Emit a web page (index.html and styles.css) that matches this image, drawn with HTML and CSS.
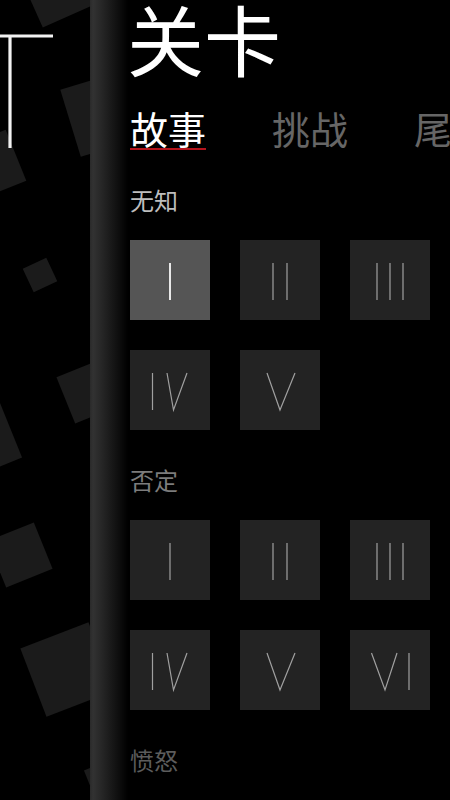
FILE: index.html
```html
<!DOCTYPE html>
<html lang="zh-CN">
<head>
    <meta charset="UTF-8">
    <meta name="viewport" content="width=device-width, initial-scale=1.0">
    <title>关卡</title>
    <link rel="stylesheet" href="styles.css">
</head>
<body>
    <div class="screen">
        <!-- Background scene behind the level panel -->
        <div class="scene">
            <div class="shard sq-1"></div>
            <div class="shard sq-2"></div>
            <div class="shard sq-3"></div>
            <div class="shard sq-4"></div>
            <div class="shard sq-5"></div>
            <div class="shard sq-6"></div>
            <div class="shard sq-7"></div>
            <div class="shard sq-8"></div>
            <div class="shard sq-9"></div>
            <svg class="glyph-mark" viewBox="0 0 90 160">
                <line x1="0" y1="36" x2="53" y2="36"/>
                <line x1="10" y1="36" x2="10" y2="148"/>
            </svg>
        </div>

        <div class="panel">
            <h1 class="title">关卡</h1>

            <div class="tabs">
                <span class="tab active">故事</span>
                <span class="tab">挑战</span>
                <span class="tab">尾声</span>
            </div>

            <section class="chapter">
                <h2 class="chapter-name name-1">无知</h2>
                <div class="levels">
                    <div class="level selected">
                        <svg viewBox="0 0 80 80"><line x1="40" y1="23" x2="40" y2="60"/></svg>
                    </div>
                    <div class="level">
                        <svg viewBox="0 0 80 80"><line x1="33" y1="23" x2="33" y2="60"/><line x1="47" y1="23" x2="47" y2="60"/></svg>
                    </div>
                    <div class="level">
                        <svg viewBox="0 0 80 80"><line x1="27" y1="23" x2="27" y2="60"/><line x1="40" y1="23" x2="40" y2="60"/><line x1="53" y1="23" x2="53" y2="60"/></svg>
                    </div>
                    <div class="level">
                        <svg viewBox="0 0 80 80"><line x1="22.5" y1="23" x2="22.5" y2="60"/><polyline points="37,23 43.5,60 57,23"/></svg>
                    </div>
                    <div class="level">
                        <svg viewBox="0 0 80 80"><polyline points="27,23 40,60 55,23"/></svg>
                    </div>
                </div>
            </section>

            <section class="chapter">
                <h2 class="chapter-name name-2">否定</h2>
                <div class="levels">
                    <div class="level">
                        <svg viewBox="0 0 80 80"><line x1="40" y1="23" x2="40" y2="60"/></svg>
                    </div>
                    <div class="level">
                        <svg viewBox="0 0 80 80"><line x1="33" y1="23" x2="33" y2="60"/><line x1="47" y1="23" x2="47" y2="60"/></svg>
                    </div>
                    <div class="level">
                        <svg viewBox="0 0 80 80"><line x1="27" y1="23" x2="27" y2="60"/><line x1="40" y1="23" x2="40" y2="60"/><line x1="53" y1="23" x2="53" y2="60"/></svg>
                    </div>
                    <div class="level">
                        <svg viewBox="0 0 80 80"><line x1="22.5" y1="23" x2="22.5" y2="60"/><polyline points="37,23 43.5,60 57,23"/></svg>
                    </div>
                    <div class="level">
                        <svg viewBox="0 0 80 80"><polyline points="27,23 40,60 55,23"/></svg>
                    </div>
                    <div class="level">
                        <svg viewBox="0 0 80 80"><polyline points="21.5,23 35,60 47,23"/><line x1="59" y1="23" x2="59" y2="60"/></svg>
                    </div>
                </div>
            </section>

            <section class="chapter">
                <h2 class="chapter-name name-3">愤怒</h2>
                <div class="levels">
                    <div class="level">
                        <svg viewBox="0 0 80 80"><line x1="40" y1="23" x2="40" y2="60"/></svg>
                    </div>
                    <div class="level">
                        <svg viewBox="0 0 80 80"><line x1="33" y1="23" x2="33" y2="60"/><line x1="47" y1="23" x2="47" y2="60"/></svg>
                    </div>
                    <div class="level">
                        <svg viewBox="0 0 80 80"><line x1="27" y1="23" x2="27" y2="60"/><line x1="40" y1="23" x2="40" y2="60"/><line x1="53" y1="23" x2="53" y2="60"/></svg>
                    </div>
                </div>
            </section>
        </div>
    </div>
</body>
</html>
```

FILE: styles.css
```css
body {
    margin: 0;
    background: #000;
    font-family: "Noto Sans CJK SC", "Noto Sans", sans-serif;
    overflow: hidden;
}

.screen {
    display: flex;
    width: 450px;
    height: 800px;
    overflow: hidden;
}

/* Left strip: what shows of the scene underneath */
.scene {
    position: relative;
    flex: 0 0 90px;
    height: 100%;
    overflow: hidden;
    background: #000;
}

.shard {
    position: absolute;
    background: #1b1b1b;
}

.sq-1 { left: 28px;  top: -42px; width: 60px; height: 60px; transform: rotate(-24deg); }
.sq-2 { left: 69px;  top: 78px;  width: 70px; height: 70px; transform: rotate(-17deg); }
.sq-3 { left: -37px; top: 138px; width: 55px; height: 55px; transform: rotate(-22deg); }
.sq-4 { left: 27px;  top: 262px; width: 26px; height: 26px; transform: rotate(-25deg); }
.sq-5 { left: 64px;  top: 366px; width: 50px; height: 50px; transform: rotate(-22deg); }
.sq-6 { left: -47px; top: 411px; width: 60px; height: 60px; transform: rotate(-22deg); }
.sq-7 { left: -5px;  top: 530px; width: 50px; height: 50px; transform: rotate(-22deg); }
.sq-8 { left: 31px;  top: 633px; width: 73px; height: 73px; transform: rotate(-21deg); }
.sq-9 { left: 93px;  top: 757px; width: 60px; height: 60px; transform: rotate(-22deg); }

.glyph-mark {
    position: absolute;
    left: 0;
    top: 0;
    width: 90px;
    height: 160px;
}

.glyph-mark line {
    stroke: #f2f2f2;
    stroke-width: 3.2;
}

/* Level panel */
.panel {
    flex: 1;
    min-width: 0;
    height: 100%;
    padding-left: 40px;
    overflow: hidden;
    background: linear-gradient(90deg, #2a2a2a 0, #323232 3px, #262626 12px, #0c0c0c 30px, #000 38px);
}

.title {
    margin: -2px 0 0 -3px;
    font-size: 77px;
    line-height: 80px;
    font-weight: 400;
    color: #fff;
    white-space: nowrap;
}

.tabs {
    display: flex;
    gap: 66px;
    margin-top: 30px;
    white-space: nowrap;
}

.tab {
    font-size: 38px;
    line-height: 40px;
    color: #666;
    border-bottom: 2px solid transparent;
}

.tab.active {
    color: #fff;
    border-bottom-color: #b3141c;
}

.chapter {
    margin-top: 38px;
}

.chapter-name {
    margin: 0 0 28px;
    font-size: 24px;
    line-height: 24px;
    font-weight: 400;
}

.name-1 { color: #bdbdbd; }
.name-2 { color: #7c7c7c; }
.name-3 { color: #5c5c5c; }

.levels {
    display: grid;
    grid-template-columns: repeat(3, 80px);
    grid-auto-rows: 80px;
    gap: 30px;
}

.level {
    background: #232323;
}

.level svg {
    display: block;
    width: 80px;
    height: 80px;
}

.level line,
.level polyline {
    fill: none;
    stroke: #a0a0a0;
    stroke-width: 1.2;
}

.level.selected {
    background: #555;
}

.level.selected line {
    stroke: #e8e8e8;
    stroke-width: 2;
}
```
